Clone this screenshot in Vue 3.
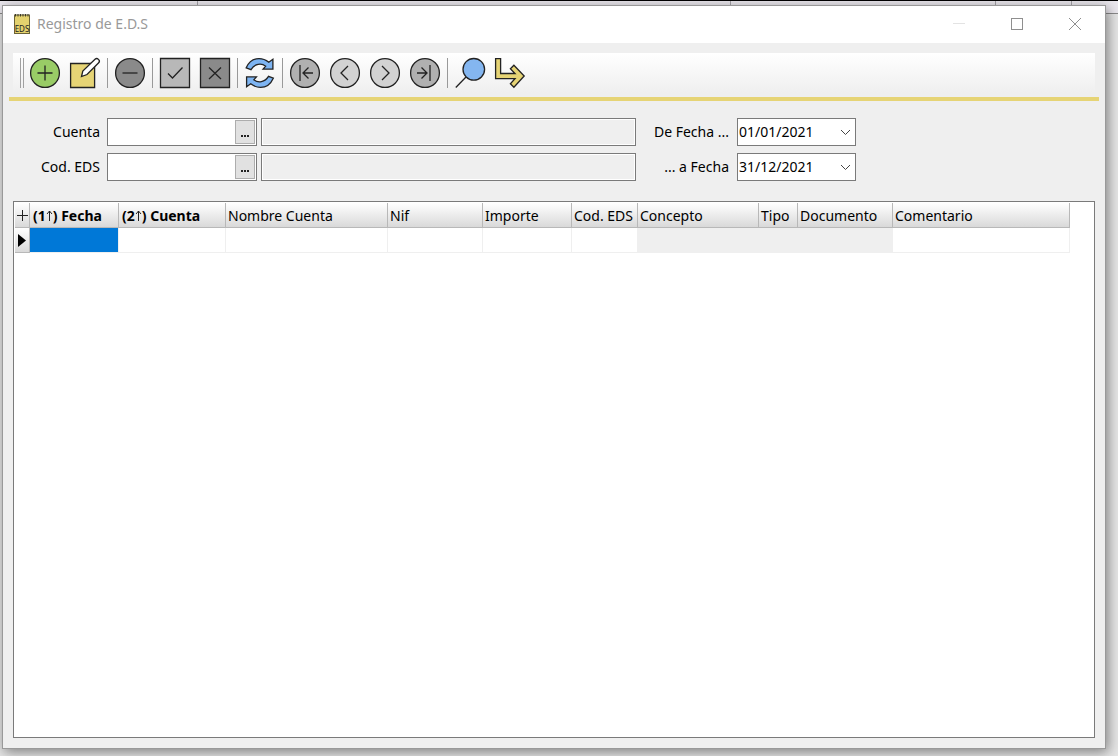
<script setup>
import { ref } from 'vue'

const accounts = ref([
  { id: 'cuenta', label: 'Cuenta', value: '', name: '', dateId: 'desde', dateLabel: 'De Fecha ...', date: '01/01/2021' },
  { id: 'codeds', label: 'Cod. EDS', value: '', name: '', dateId: 'hasta', dateLabel: '... a Fecha', date: '31/12/2021' },
])

const columns = [
  { order: '1', title: 'Fecha', cls: 'c-fecha', cell: 'selected' },
  { order: '2', title: 'Cuenta', cls: 'c-cuenta' },
  { title: 'Nombre Cuenta', cls: 'c-nombre' },
  { title: 'Nif', cls: 'c-nif' },
  { title: 'Importe', cls: 'c-importe' },
  { title: 'Cod. EDS', cls: 'c-cod' },
  { title: 'Concepto', cls: 'c-concepto', cell: 'locked' },
  { title: 'Tipo', cls: 'c-tipo', cell: 'locked' },
  { title: 'Documento', cls: 'c-documento', cell: 'locked' },
  { title: 'Comentario', cls: 'c-comentario' },
]
</script>

<template>
  <div class="desktop">
    <div class="backdrop" aria-hidden="true">
      <div class="strip"><i class="s1"></i><i class="s2"></i><i class="s3"></i><i class="s4"></i><i class="s5"></i></div>
    </div>
    <main class="window">
      <header class="titlebar">
        <svg class="logo" width="16" height="20" viewBox="0 0 16 20">
          <rect x="0.5" y="1" width="15" height="18.500" fill="#e4d26e" stroke="#6b6337" />
          <path d="M1.5 0v2.500M4 0v2.500M6.500 0v2.500M9 0v2.500M11.500 0v2.500M14 0v2.500" stroke="#3c3a2a" />
          <text x="8" y="18" text-anchor="middle" class="logo-text">EDS</text>
        </svg>
        <h1>Registro de E.D.S</h1>
        <div class="controls">
          <button type="button" aria-label="Minimizar"><svg width="12" height="12"><path d="M0 5.5h12" stroke="#e3e3e3" /></svg></button>
          <button type="button" aria-label="Maximizar"><svg width="12" height="12"><rect x=".5" y=".5" width="11" height="11" fill="none" stroke="#8f8f8f" /></svg></button>
          <button type="button" aria-label="Cerrar"><svg width="12" height="12"><path d="M0 0l12 12M12 0L0 12" stroke="#8f8f8f" /></svg></button>
        </div>
      </header>

      <nav class="toolbar-area" aria-label="Acciones">
        <div class="toolbar">
          <span class="grip"></span>
          <div class="group">
            <button type="button" aria-label="Nuevo"><svg viewBox="0 0 30 30"><circle cx="15" cy="15" r="14.4" fill="#99cc66" /><path d="M15 7.5v15M7.5 15h15" /></svg></button>
            <button type="button" aria-label="Editar"><svg viewBox="0 0 30 30"><path d="M.6 5.5h24v24H.6z" fill="#e6d475" /><path d="M11.500 18.500l1.300-5.500L25 1.300c2.200-2 5.800 1 3.700 3.500L17 16.500z" fill="#fff" /></svg></button>
          </div>
          <span class="sep"></span>
          <div class="group">
            <button type="button" aria-label="Eliminar"><svg viewBox="0 0 30 30"><circle cx="15" cy="15" r="14.4" fill="#8a8a8a" /><path d="M7.5 15h15" /></svg></button>
          </div>
          <span class="sep"></span>
          <div class="group">
            <button type="button" aria-label="Aceptar"><svg viewBox="0 0 30 30"><path d="M.5.5h29v29H.5z" fill="#b8b8b8" /><path d="M8 15.5l4.5 4.500L22.500 9.500" fill="none" /></svg></button>
            <button type="button" aria-label="Cancelar"><svg viewBox="0 0 30 30"><path d="M.5.5h29v29H.5z" fill="#8a8a8a" /><path d="M9 9.500l12 11.500M21 9.500L9 21" /></svg></button>
          </div>
          <span class="sep"></span>
          <div class="group">
            <button type="button" aria-label="Actualizar">
              <svg class="blue" viewBox="0 0 30 30">
                <path d="M1.200 9.800C4 3.500 9 .6 14 .6c4 0 7 1.400 9.800 3.600l4.100-3v9.900H18.100l2.600-2.900c-4.200-3.300-11.100-2.600-14.700 3.400z" />
                <path transform="rotate(180 15 15)" d="M1.700 9.800C4.500 3.500 9.500 .6 14.500 .6c4 0 7 1.400 9.800 3.600l4.100-3v9.900H18.600l2.600-2.900c-4.200-3.300-11.100-2.600-14.700 3.400z" />
              </svg>
            </button>
          </div>
          <span class="sep"></span>
          <div class="group">
            <button type="button" aria-label="Primero"><svg viewBox="0 0 30 30"><circle cx="15" cy="15" r="14.4" fill="#b0b0b0" /><path d="M10 7v16M23 15h-9M18.500 9.500L13 15l5.500 5.500" fill="none" /></svg></button>
            <button type="button" aria-label="Anterior"><svg viewBox="0 0 30 30"><circle cx="15" cy="15" r="14.4" fill="#d2d2d2" /><path d="M18 8l-7 7 7 7" fill="none" /></svg></button>
            <button type="button" aria-label="Siguiente"><svg viewBox="0 0 30 30"><circle cx="15" cy="15" r="14.4" fill="#d2d2d2" /><path d="M12 8l7 7-7 7" fill="none" /></svg></button>
            <button type="button" aria-label="Último"><svg viewBox="0 0 30 30"><circle cx="15" cy="15" r="14.4" fill="#b0b0b0" /><path d="M20 7v16M7 15h9M11.500 9.500L17 15l-5.500 5.500" fill="none" /></svg></button>
          </div>
          <span class="sep"></span>
          <div class="group">
            <button type="button" aria-label="Buscar"><svg viewBox="0 0 30 30"><path d="M11 19L.8 29.500" /><circle cx="18.800" cy="11.300" r="10.800" fill="#84b6f0" /></svg></button>
            <button type="button" aria-label="Salir"><svg viewBox="0 0 30 30"><path d="M.6.6h5v14.900H20l-4.600-4.700 3.500-3.500L29.200 18 18.900 29.200l-3.500-3.500 4.600-5H.6z" fill="#e6d475" /></svg></button>
          </div>
        </div>
      </nav>

      <form class="filters" @submit.prevent>
        <div v-for="a in accounts" :key="a.id" class="row">
          <label class="lead" :for="a.id">{{ a.label }}</label>
          <div class="box lookup">
            <input :id="a.id" v-model="a.value" type="text" />
            <button type="button" :aria-label="'Buscar ' + a.label"><svg width="8" height="2"><path d="M0 0h2v2H0zM3 0h2v2H3zM6 0h2v2H6z" fill="#222" /></svg></button>
          </div>
          <input class="box name" type="text" readonly :value="a.name" :aria-label="'Nombre ' + a.label" />
          <label class="date-label" :for="a.dateId">{{ a.dateLabel }}</label>
          <div class="box date">
            <input :id="a.dateId" v-model="a.date" type="text" />
            <button type="button" aria-label="Abrir calendario"><svg width="11" height="7"><path d="M1 1l4.500 4.500L10 1" fill="none" stroke="#444" /></svg></button>
          </div>
        </div>
      </form>

      <section class="grid">
        <table>
          <colgroup>
            <col class="c-mark" />
            <col v-for="c in columns" :key="c.cls" :class="c.cls" />
          </colgroup>
          <thead>
            <tr>
              <th class="mark"><svg width="11" height="11"><path d="M5.500 0v11M0 5.500h11" stroke="#222" /></svg></th>
              <th v-for="c in columns" :key="c.cls" :class="{ sorted: c.order }">
                <template v-if="c.order">({{ c.order }}<svg class="up" width="7" height="11"><path d="M3.500 11V1M1 4l2.500-3L6 4" fill="none" stroke="#222" /></svg>) </template>{{ c.title }}
              </th>
            </tr>
          </thead>
          <tbody>
            <tr>
              <td class="mark"><svg width="8" height="13"><path d="M0 0l8 6.500L0 13z" /></svg></td>
              <td v-for="c in columns" :key="c.cls" :class="c.cell"></td>
            </tr>
          </tbody>
        </table>
      </section>
    </main>
  </div>
</template>

<style>
body {
  margin: 0;
}
</style>

<style scoped>
* {
  box-sizing: border-box;
}
.desktop {
  position: relative;
  display: flex;
  min-height: 100vh;
  padding: 5px 12px 7px 2px;
  font-family: "Noto Sans", "Open Sans", sans-serif;
  font-size: 14px;
  line-height: 20px;
  color: #000;
  overflow: hidden;
}
.backdrop {
  position: absolute;
  inset: 0;
  background: #e6e6e6;
  border-top: 1px solid #000;
}
.strip {
  display: flex;
  height: 13px;
  background: #ebe8ee;
  border-bottom: 1px solid #8a8a8a;
}
.strip i {
  border-right: 1px solid #a5a3a8;
}
.s1 { flex: 198; }
.s2 { flex: 534; }
.s3 { flex: 265; }
.s4 { flex: 75; }
.s5 { flex: 46; }
.strip .s5 {
  border-right: 0;
}
.window {
  position: relative;
  flex: 1;
  min-width: 0;
  display: flex;
  flex-direction: column;
  background: #efefef;
  border: 1px solid #999;
  box-shadow: 2px 3px 12px rgba(0, 0, 0, 0.45);
}
button {
  display: flex;
  align-items: center;
  justify-content: center;
  padding: 0;
  border: 0;
  background: none;
}
.titlebar {
  display: flex;
  align-items: flex-start;
  height: 37px;
  padding-left: 11px;
  background: #fff;
}
.logo {
  margin-top: 8px;
}
.logo-text {
  font: 8px "Noto Sans", sans-serif;
  fill: #222;
}
h1 {
  flex: 1;
  margin: 8px 0 0 7px;
  font-size: 14px;
  font-weight: 400;
  color: #999;
}
.controls {
  display: flex;
  margin-right: 1px;
}
.controls button {
  width: 58px;
  height: 36px;
}
.toolbar-area {
  margin: 10px 6px 0;
  padding: 0 4px 4px;
  border-bottom: 4px solid #e6d475;
}
.toolbar {
  display: flex;
  align-items: center;
  height: 40px;
  padding-left: 7px;
  background: linear-gradient(#fff, #efefef);
}
.grip {
  width: 4px;
  height: 30px;
  margin-right: 6px;
  border: solid #a0a0a0;
  border-width: 0 1px;
}
.group {
  display: flex;
  gap: 10px;
}
.group button,
.group svg {
  width: 30px;
  height: 30px;
}
.group svg {
  stroke: #222;
  stroke-width: 1.3;
  overflow: visible;
}
.blue {
  fill: #7db4f2;
}
.sep {
  width: 1px;
  height: 30px;
  margin: 0 7px;
  background: #999;
}
.filters {
  display: flex;
  flex-direction: column;
  gap: 7px;
  margin: 17px 10px 20px;
}
.row {
  display: flex;
  align-items: center;
}
.lead {
  width: 87px;
  margin-right: 7px;
  text-align: right;
}
.box {
  height: 28px;
  border: 1px solid #7a7a7a;
  background: #fff;
}
.box input {
  flex: 1;
  min-width: 0;
  padding: 0 1px;
  border: 0;
  background: none;
  font: inherit;
  outline: none;
}
.lookup {
  display: flex;
  width: 150px;
  padding: 1px;
}
.lookup button {
  align-items: flex-end;
  width: 20px;
  padding-bottom: 6px;
  border: 1px solid #adadad;
  background: #e1e1e1;
}
.name {
  flex: 0 1 375px;
  min-width: 0;
  margin-left: 4px;
  padding: 0 2px;
  background: #efefef;
  box-shadow: inset 0 0 0 1px #fff;
  font: inherit;
  outline: none;
}
.date-label {
  width: 93px;
  margin-right: 8px;
  text-align: right;
}
.date {
  display: flex;
  width: 119px;
}
.date button {
  width: 20px;
}
.grid {
  flex: 1;
  margin: 0 10px 10px;
  padding: 1px;
  border: 1px solid #7a7a7a;
  background: #fff;
}
table {
  width: 1055px;
  table-layout: fixed;
  border-collapse: separate;
  border-spacing: 0;
}
.c-mark { width: 15px; }
.c-fecha { width: 89px; }
.c-cuenta { width: 107px; }
.c-nombre { width: 162px; }
.c-nif { width: 95px; }
.c-importe { width: 89px; }
.c-cod { width: 66px; }
.c-concepto { width: 121px; }
.c-tipo { width: 39px; }
.c-documento { width: 95px; }
.c-comentario { width: 177px; }
th,
td {
  height: 25px;
  padding: 0 0 0 2px;
  border-right: 1px solid #efefef;
  border-bottom: 1px solid #efefef;
  text-align: left;
  white-space: nowrap;
}
th {
  padding-top: 2px;
  border-color: #b8b8b8;
  background: linear-gradient(#fff, #d9d9d9);
  font-weight: 400;
}
.sorted {
  padding-left: 3px;
  font-weight: 700;
}
.up {
  display: inline-block;
}
.mark {
  padding: 0;
  text-align: center;
  line-height: 0;
}
td.mark {
  border-color: #b8b8b8;
  background: linear-gradient(#fff, #d9d9d9);
}
.selected {
  background: #0078d7;
}
.locked {
  background: #efefef;
}
</style>
